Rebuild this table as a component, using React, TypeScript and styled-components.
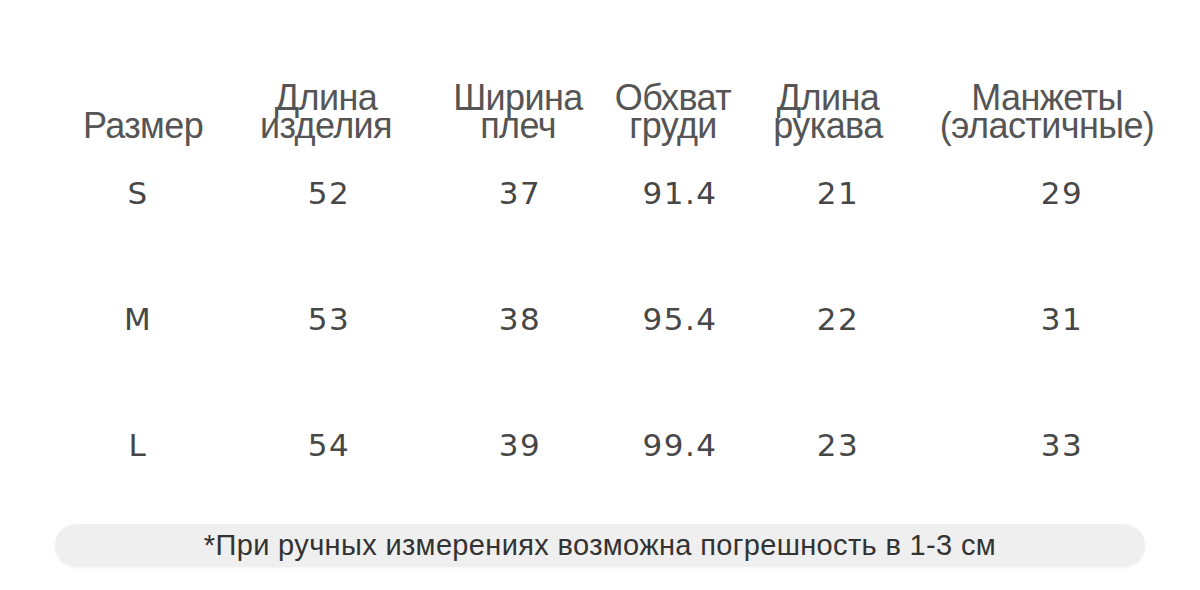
import styled, { createGlobalStyle } from "styled-components";

const GlobalStyle = createGlobalStyle`
  html, body {
    margin: 0;
    padding: 0;
    background: #ffffff;
  }
  body {
    width: 1200px;
    height: 590px;
    overflow: hidden;
  }
`;

interface IColumn {
  title: string[];
  shift: number;
}

const columns: IColumn[] = [
  { title: ["Размер"], shift: 5 },
  { title: ["Длина", "изделия"], shift: -3 },
  { title: ["Ширина", "плеч"], shift: -2 },
  { title: ["Обхват", "груди"], shift: -7 },
  { title: ["Длина", "рукава"], shift: -10 },
  { title: ["Манжеты", "(эластичные)"], shift: -15 },
];

const rows: string[][] = [
  ["S", "52", "37", "91.4", "21", "29"],
  ["M", "53", "38", "95.4", "22", "31"],
  ["L", "54", "39", "99.4", "23", "33"],
];

export default function App() {
  return (
    <>
      <GlobalStyle />
      <Page>
        <Table>
          {columns.map((col, i) => (
            <HeadCell key={`h${i}`} $shift={col.shift}>
              {col.title.map((line) => (
                <HeadLine key={line}>{line}</HeadLine>
              ))}
            </HeadCell>
          ))}
          {rows.map((row, r) =>
            row.map((value, c) => (
              <ValueCell key={`${r}-${c}`} $first={r === 0}>
                {value}
              </ValueCell>
            ))
          )}
        </Table>
        <Note>*При ручных измерениях возможна погрешность в 1-3 см</Note>
      </Page>
    </>
  );
}

const Page = styled.div`
  width: 1200px;
  height: 590px;
  padding-top: 84px;
  box-sizing: border-box;
  display: flex;
  flex-direction: column;
  align-items: center;
`;

const Table = styled.div`
  align-self: stretch;
  padding-left: 40px;
  display: grid;
  grid-template-columns: 196px 186px 196px 124px 192px 256px;
  align-items: end;
`;

const HeadCell = styled.div<{ $shift: number }>`
  display: flex;
  flex-direction: column;
  align-items: center;
  transform: translateX(${(p) => p.$shift}px);
  font-family: "Liberation Sans", Arial, sans-serif;
  font-size: 36px;
  line-height: 27.5px;
  letter-spacing: -0.6px;
  color: #555555;
  white-space: nowrap;
`;

const HeadLine = styled.span`
  display: block;
`;

const ValueCell = styled.div<{ $first: boolean }>`
  height: 126px;
  margin-top: ${(p) => (p.$first ? "38px" : "0")};
  text-align: center;
  font-family: "DejaVu Sans", Verdana, sans-serif;
  font-size: 31px;
  line-height: 32px;
  letter-spacing: 1.5px;
  color: #474747;
`;

const Note = styled.div`
  margin-top: -31px;
  width: 1090px;
  height: 43px;
  border-radius: 22px;
  background: #efefef;
  box-shadow: 0 1px 3px rgba(0, 0, 0, 0.05);
  display: flex;
  align-items: center;
  justify-content: center;
  font-family: "Liberation Sans", Arial, sans-serif;
  font-size: 29px;
  letter-spacing: 0.35px;
  color: #333333;
`;
